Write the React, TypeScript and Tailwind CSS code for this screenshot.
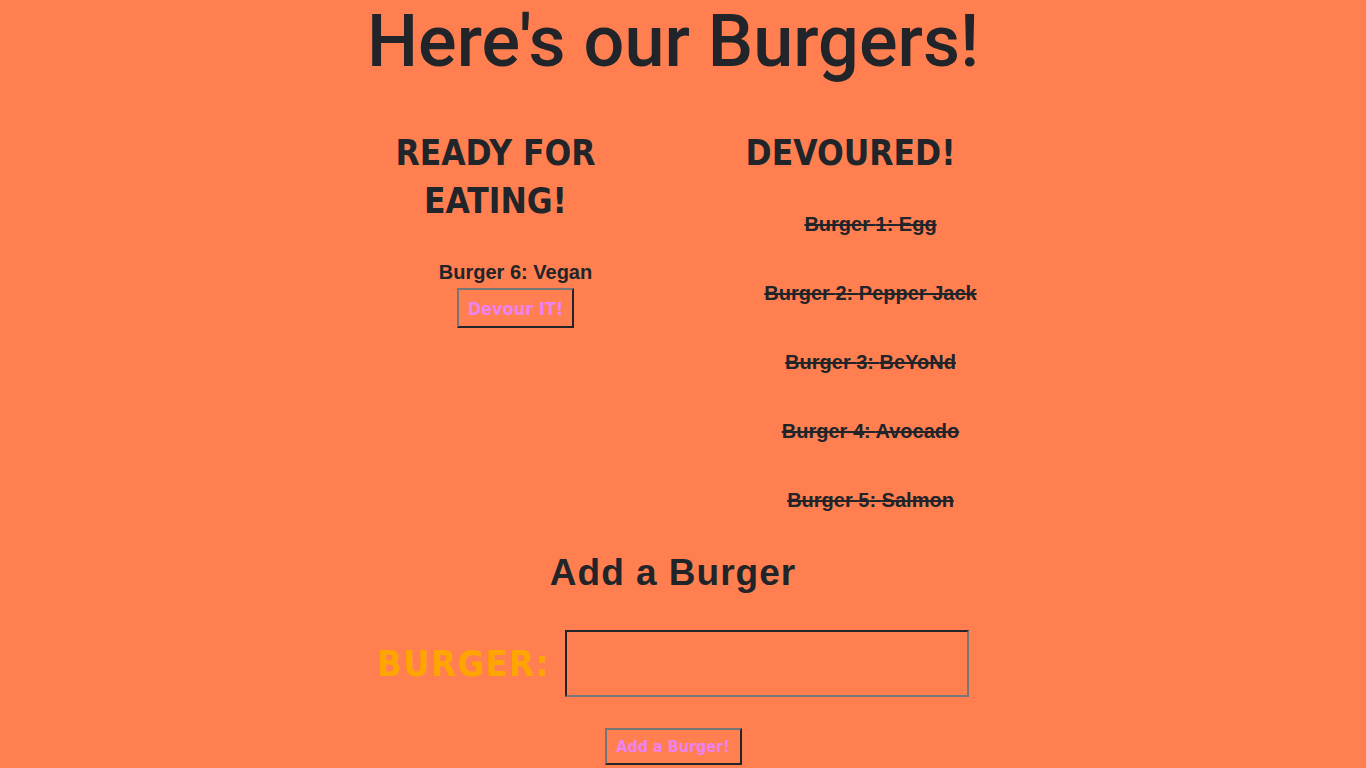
import React, { useState } from 'react';

const NARROW = "font-['DejaVu_Sans_Condensed','DejaVu_Sans',sans-serif] [font-stretch:condensed]";
const SANS = "font-['Liberation_Sans',Arial,sans-serif]";
const TITLE = "font-['Roboto','Liberation_Sans',sans-serif]";

const INITIAL_BURGERS = [
  { id: 1, name: 'Egg', devoured: true },
  { id: 2, name: 'Pepper Jack', devoured: true },
  { id: 3, name: 'BeYoNd', devoured: true },
  { id: 4, name: 'Avocado', devoured: true },
  { id: 5, name: 'Salmon', devoured: true },
  { id: 6, name: 'Vegan', devoured: false },
];

export default function App() {
  const [burgers, setBurgers] = useState(INITIAL_BURGERS);
  const [name, setName] = useState('');

  const ready = burgers.filter((b) => !b.devoured);
  const eaten = burgers.filter((b) => b.devoured);

  const devour = (id: number) =>
    setBurgers((list) => list.map((b) => (b.id === id ? { ...b, devoured: true } : b)));

  const addBurger = () => {
    if (!name.trim()) return;
    setBurgers((list) => [...list, { id: list.length + 1, name: name.trim(), devoured: false }]);
    setName('');
  };

  return (
    <div className="min-h-screen bg-[#ff7f50] text-[#212529]">
      <div className="flex justify-center pr-5">
        <div className="w-[710px]">
          <h1 className={`${TITLE} text-center text-[72px] leading-[84px] font-medium`}>Here's our Burgers!</h1>

          {/* Burger columns */}
          <div className="mt-[45px] grid grid-cols-2">
            <div>
              <h2 className={`${NARROW} text-center text-[35px] leading-[48px] font-bold`}>
                READY FOR
                <br />
                EATING!
              </h2>
              <ul className="mt-[35px] pl-10 text-center">
                {ready.map((b) => (
                  <li key={b.id} className="mb-[21px]">
                    <div className={`${SANS} text-[20px] leading-6 font-bold`}>Burger {b.id}: {b.name}</div>
                    <button
                      onClick={() => devour(b.id)}
                      className={`${NARROW} mt-[4px] h-10 w-[117px] whitespace-nowrap border-2 border-t-[#767676] border-l-[#767676] border-r-[#212529] border-b-[#212529] text-[18px] font-bold text-[#ee82ee]`}
                    >
                      Devour IT!
                    </button>
                  </li>
                ))}
              </ul>
            </div>
            <div>
              <h2 className={`${NARROW} text-center text-[35px] leading-[48px] font-bold`}>DEVOURED!</h2>
              <ul className="mt-[35px] pl-10 text-center">
                {eaten.map((b) => (
                  <li key={b.id} className={`${SANS} mb-[45px] text-[20px] leading-6 font-bold line-through decoration-2`}>
                    Burger {b.id}: {b.name}
                  </li>
                ))}
              </ul>
            </div>
          </div>

          {/* Add form */}
          <h3 className={`${SANS} mt-[-7px] text-center text-[37px] leading-[46px] font-bold tracking-[1px]`}>Add a Burger</h3>
          <div className="mt-[34px] flex items-center justify-center gap-[15px]">
            <label className={`${NARROW} text-[36px] font-bold tracking-[1.5px] text-[#ffa500]`}>BURGER:</label>
            <input
              value={name}
              onChange={(e) => setName(e.target.value)}
              className="h-[67px] w-[404px] border-2 border-t-[#212529] border-l-[#212529] border-r-[#767676] border-b-[#767676] bg-transparent px-2 text-xl outline-none"
            />
          </div>
          <div className="mt-[31px] flex justify-center">
            <button
              onClick={addBurger}
              className={`${NARROW} h-[37px] w-[137px] whitespace-nowrap border-2 border-t-[#767676] border-l-[#767676] border-r-[#212529] border-b-[#212529] text-[16px] font-bold text-[#ee82ee]`}
            >
              Add a Burger!
            </button>
          </div>
        </div>
      </div>
    </div>
  );
}
